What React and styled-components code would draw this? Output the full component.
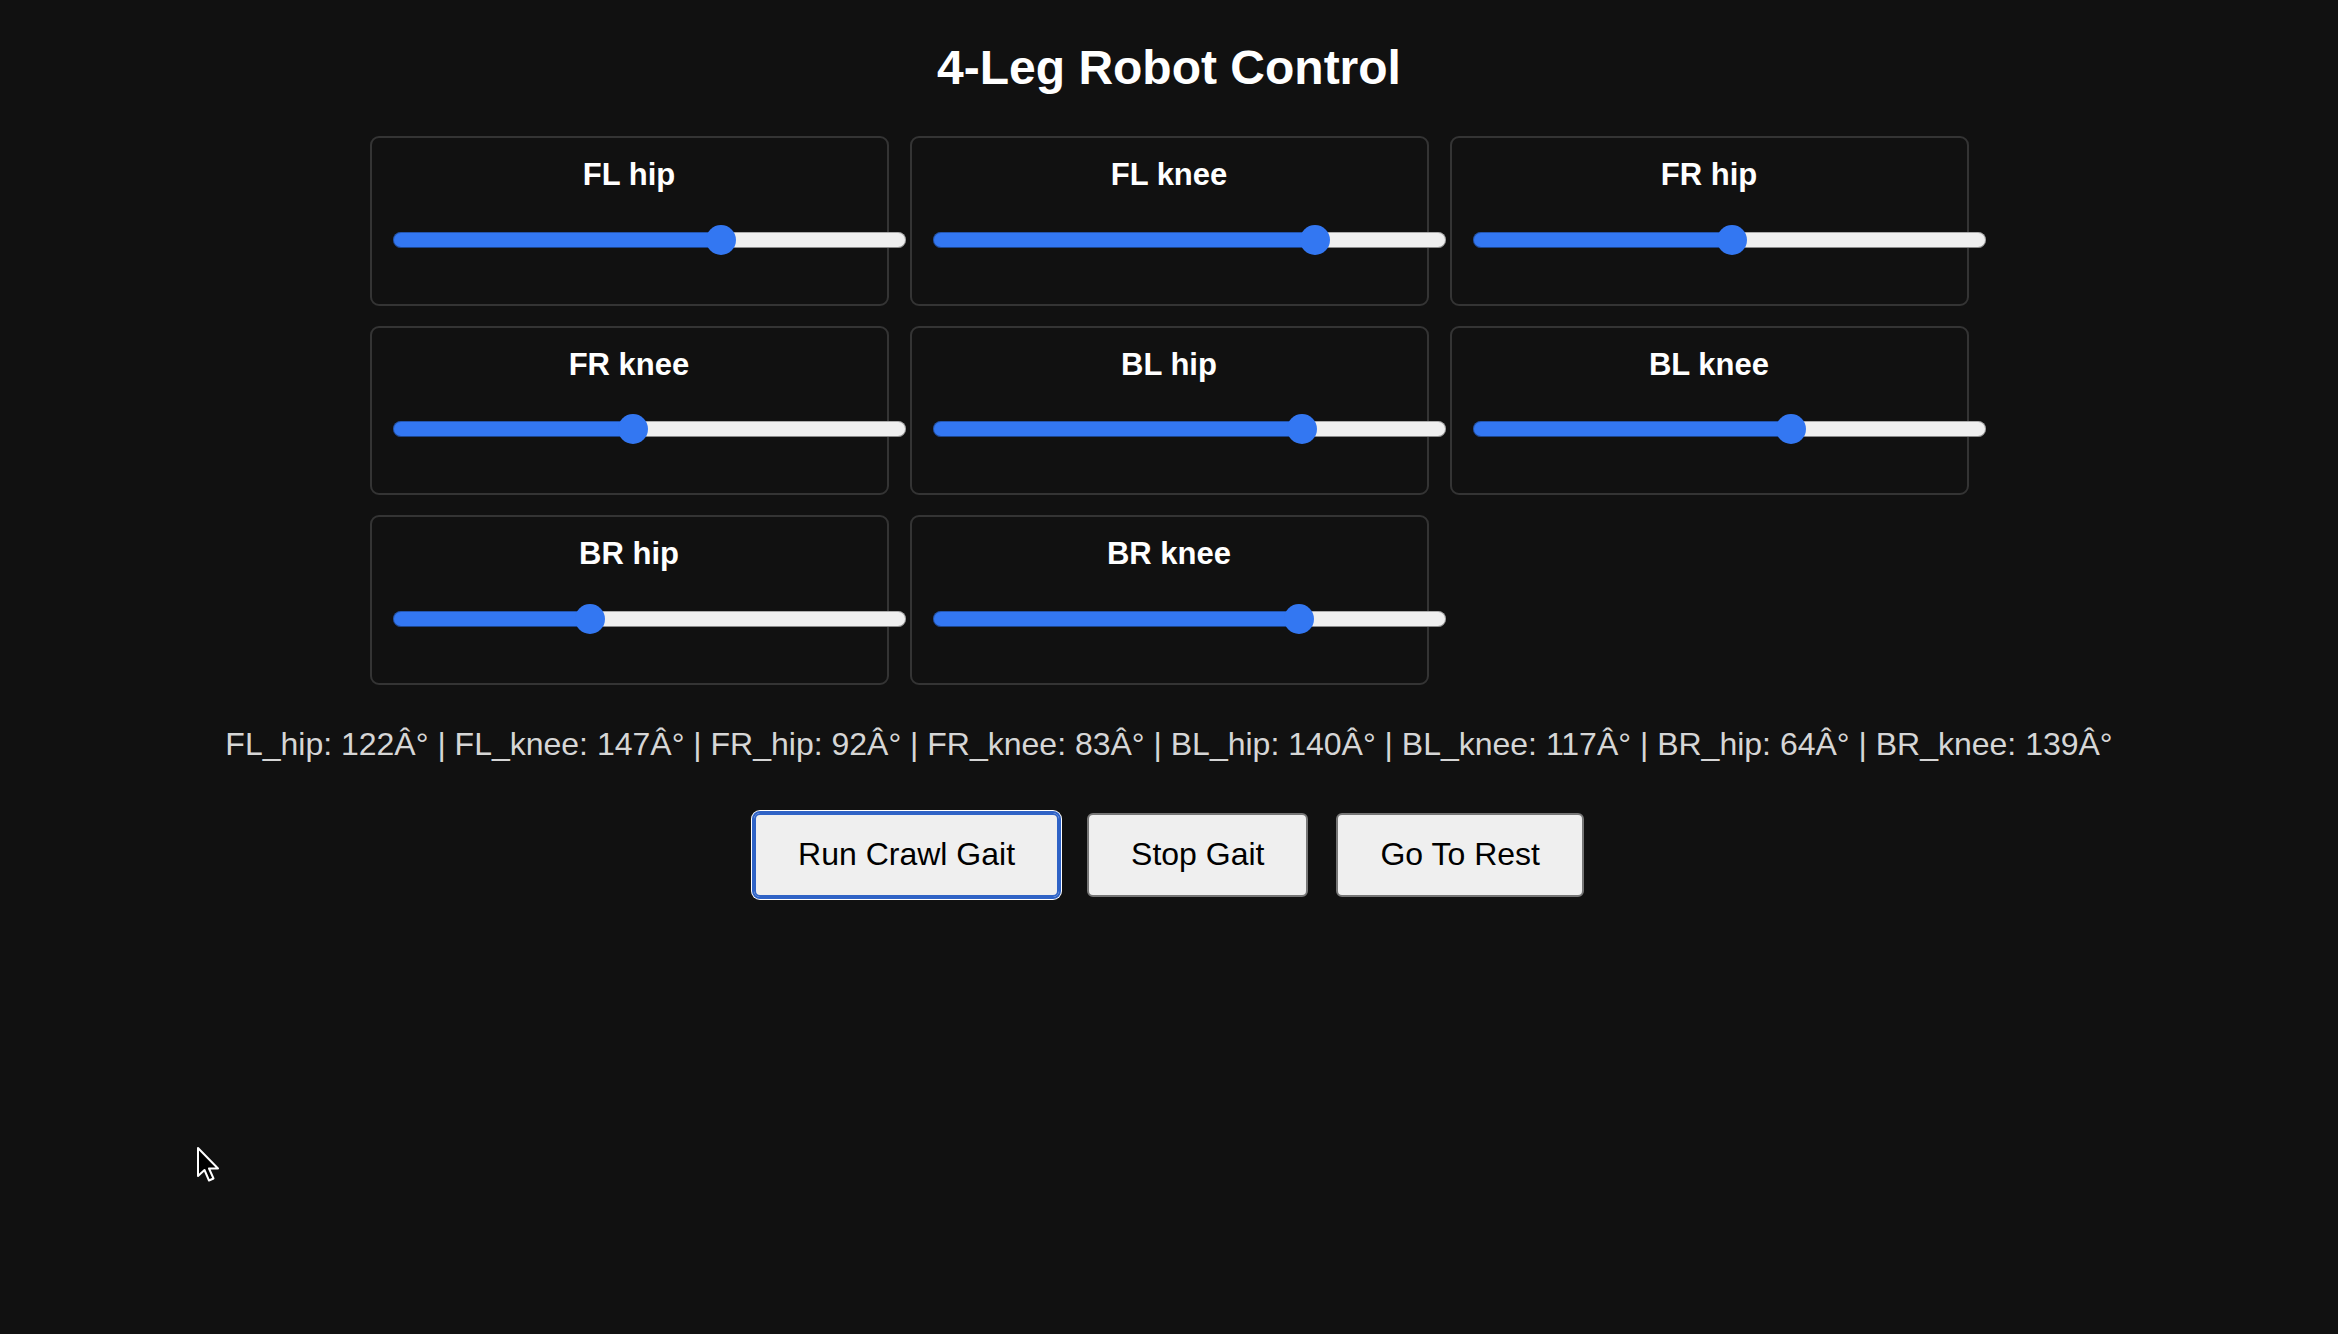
import React, { useState } from "react";
import styled, { createGlobalStyle } from "styled-components";

const GlobalStyle = createGlobalStyle`
  html, body {
    margin: 0;
    padding: 0;
    background: #111111;
  }
  body {
    min-height: 1334px;
    font-family: "Liberation Sans", Arial, Helvetica, sans-serif;
    color: #ffffff;
  }
`

const Page = styled.div`
  position: relative;
  min-height: 1334px;
  padding-top: 40px;
  box-sizing: border-box;
`
const Title = styled.h1`
  margin: 0 0 41px;
  font-size: 48px;
  line-height: 1.15;
  font-weight: bold;
  text-align: center;
  color: #ffffff;
`
const JointGrid = styled.div`
  display: grid;
  grid-template-columns: repeat(3, 519px);
  justify-content: center;
  column-gap: 21px;
  row-gap: 20px;
`
const JointCard = styled.div`
  box-sizing: border-box;
  border: 2px solid #343434;
  border-radius: 9px;
  background: #111111;
  padding: 19px 21px 49px;
`
const JointLabel = styled.div`
  margin-bottom: 32px;
  font-size: 31px;
  line-height: 1.15;
  font-weight: bold;
  text-align: center;
  color: #ffffff;
`
const Slider = styled.input`
  -webkit-appearance: none;
  appearance: none;
  display: block;
  width: calc(100% + 40px);
  height: 30px;
  margin: 0;
  padding: 0;
  background: transparent;
  outline: none;
  &::-webkit-slider-runnable-track {
    height: 16px;
    border-radius: 8px;
    background: linear-gradient(
      to right,
      #3377f2 0,
      #3377f2 var(--fill),
      #efefef var(--fill),
      #efefef 100%
    );
    box-shadow: inset 0 0 0 1px rgba(0, 0, 0, 0.28), inset 0 -1px 0 rgba(0, 0, 0, 0.2);
  }
  &::-webkit-slider-thumb {
    -webkit-appearance: none;
    appearance: none;
    width: 30px;
    height: 30px;
    margin-top: -7px;
    border: none;
    border-radius: 50%;
    background: #3377f2;
  }
`
const Status = styled.div`
  margin-top: 41px;
  font-size: 32px;
  line-height: 1.15;
  text-align: center;
  white-space: nowrap;
  color: #d6d6d6;
`
const ButtonRow = styled.div`
  display: flex;
  justify-content: center;
  gap: 28px;
  margin-top: 50px;
`
const ActionButton = styled.button`
  box-sizing: border-box;
  padding: 21.5px 42px;
  font-family: "Liberation Sans", Arial, Helvetica, sans-serif;
  font-size: 32px;
  line-height: 1.15;
  color: #000000;
  background: #efefef;
  border: 2px solid ${p => p.$focused ? "#2f63c6" : "#767676"};
  border-radius: 6px;
  outline: ${p => p.$focused ? "2px solid #2f63c6" : "none"};
  box-shadow: ${p => p.$focused ? "0 0 0 3px #ffffff" : "none"};
  cursor: pointer;
`
const Pointer = styled.svg`
  position: absolute;
  left: 196px;
  top: 1146px;
  width: 26px;
  height: 38px;
  pointer-events: none;
`

const JOINTS = [
  { key: "FL_hip", label: "FL hip", pos: 117, sent: 122 },
  { key: "FL_knee", label: "FL knee", pos: 137, sent: 147 },
  { key: "FR_hip", label: "FR hip", pos: 91, sent: 92 },
  { key: "FR_knee", label: "FR knee", pos: 84, sent: 83 },
  { key: "BL_hip", label: "BL hip", pos: 132, sent: 140 },
  { key: "BL_knee", label: "BL knee", pos: 113, sent: 117 },
  { key: "BR_hip", label: "BR hip", pos: 68, sent: 64 },
  { key: "BR_knee", label: "BR knee", pos: 131, sent: 139 },
]

const fillFor = value => {
  const p = value / 180
  return `calc(15px + (100% - 30px) * ${p})`
}

const App = () => {
  const [positions, setPositions] = useState(
    Object.fromEntries(JOINTS.map(j => [j.key, j.pos]))
  )
  const status = JOINTS.map(j => `${j.key}: ${j.sent}\u00C2\u00B0`).join(" | ")

  return <Page>
    <GlobalStyle />
    <Title>4-Leg Robot Control</Title>
    <JointGrid>
      {
        JOINTS.map(j => (
          <JointCard key={ j.key }>
            <JointLabel>{ j.label }</JointLabel>
            <Slider
              type="range"
              min="0"
              max="180"
              value={ positions[j.key] }
              style={{ "--fill": fillFor(positions[j.key]) }}
              onChange={ e => setPositions({ ...positions, [j.key]: Number(e.target.value) }) }
            />
          </JointCard>
        ))
      }
    </JointGrid>
    <Status>{ status }</Status>
    <ButtonRow>
      <ActionButton $focused>Run Crawl Gait</ActionButton>
      <ActionButton>Stop Gait</ActionButton>
      <ActionButton>Go To Rest</ActionButton>
    </ButtonRow>
    <Pointer viewBox="0 0 26 38">
      <path
        d="M2 2 L2 30 L8.5 24 L13 34.5 L17.5 32.5 L13 22.5 L22 22.5 Z"
        fill="#000000"
        stroke="#ffffff"
        strokeWidth="2"
        strokeLinejoin="round"
      />
    </Pointer>
  </Page>
}

export default App
